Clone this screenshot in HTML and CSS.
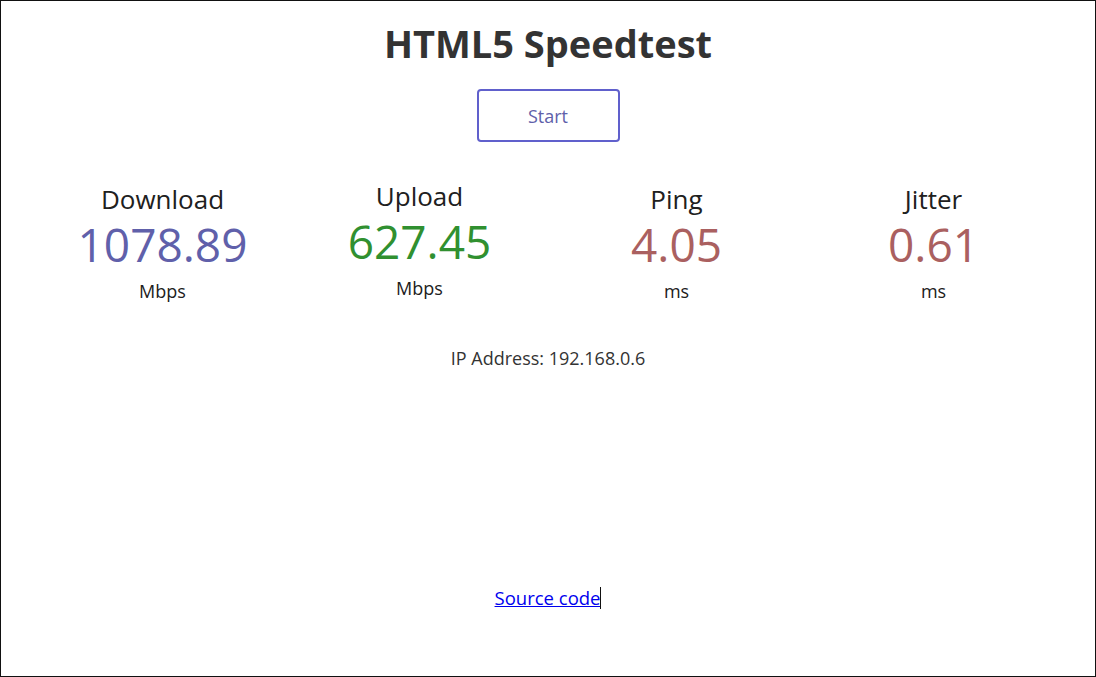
FILE: index.html
```html
<!DOCTYPE html>
<html>
<head>
<meta charset="utf-8">
<title>HTML5 Speedtest</title>
<link rel="stylesheet" href="styles.css">
</head>
<body>
<div class="page">
  <h1 class="title">HTML5 Speedtest</h1>
  <div class="start-wrap"><button class="start-btn">Start</button></div>
  <div class="groups">
    <div class="group">
      <div class="label">Download</div>
      <div class="value dl">1078.89</div>
      <div class="unit">Mbps</div>
    </div>
    <div class="group up">
      <div class="label">Upload</div>
      <div class="value ul">627.45</div>
      <div class="unit">Mbps</div>
    </div>
    <div class="group">
      <div class="label">Ping</div>
      <div class="value ping">4.05</div>
      <div class="unit">ms</div>
    </div>
    <div class="group">
      <div class="label">Jitter</div>
      <div class="value jit">0.61</div>
      <div class="unit">ms</div>
    </div>
  </div>
  <div class="ip">IP Address: 192.168.0.6</div>
  <div class="source"><a href="#">Source code</a><span class="caret"></span></div>
</div>
</body>
</html>
```
FILE: styles.css
```css
html, body {
  margin: 0;
  padding: 0;
  background: #fff;
}
.page {
  box-sizing: border-box;
  width: 1096px;
  height: 677px;
  border: 1px solid #111;
  font-family: "Open Sans", "Noto Sans", sans-serif;
  color: #202020;
  text-align: center;
  display: flex;
  flex-direction: column;
  align-items: center;
}
.title {
  margin: 17px 0 0;
  font-size: 38px;
  line-height: 50px;
  font-weight: 700;
  color: #333;
}
.start-wrap {
  margin-top: 21px;
  display: flex;
}
.start-btn {
  box-sizing: border-box;
  width: 143px;
  height: 53px;
  border: 2px solid #6060cc;
  border-radius: 4px;
  background: #fff;
  color: #6060aa;
  font-family: inherit;
  font-size: 18px;
  padding: 0;
}
.groups {
  margin-top: 42px;
  width: 1028px;
  display: grid;
  grid-template-columns: repeat(4, 1fr);
  align-items: start;
}
.group.up {
  margin-top: -3px;
}
.label {
  font-size: 26px;
  line-height: 30px;
  color: #202020;
}
.value {
  font-size: 46px;
  line-height: 60px;
}
.dl { color: #6060aa; }
.ul { color: #309030; }
.ping, .jit { color: #aa6060; }
.unit {
  margin-top: 5px;
  font-size: 18px;
  line-height: 24px;
  color: #202020;
}
.ip {
  margin-top: 43px;
  font-size: 18px;
  line-height: 24px;
  color: #333;
}
.source {
  margin-top: 216px;
  font-size: 18.5px;
  line-height: 24px;
  display: flex;
  align-items: center;
}
.source a {
  color: #0000ee;
}
.caret {
  display: inline-block;
  width: 1px;
  height: 22px;
  background: #111;
}
```
